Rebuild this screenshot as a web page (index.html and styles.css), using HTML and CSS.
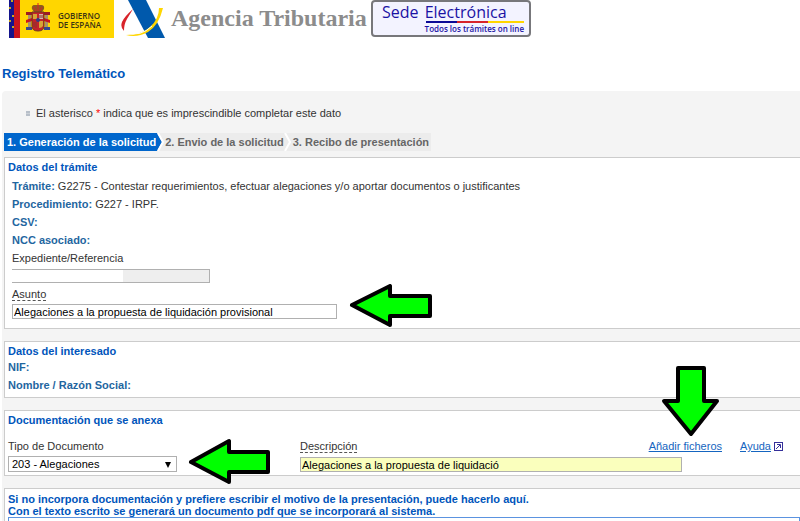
FILE: index.html
```html
<!DOCTYPE html>
<html lang="es">
<head>
    <meta charset="UTF-8">
    <title>Registro Telemático</title>
    <link rel="stylesheet" href="styles.css">
</head>
<body>
    <header class="header">
        <div class="gobierno">
            <svg class="escudo" width="44" height="38" viewBox="0 0 44 38">
                <rect width="11" height="38" fill="#14148c"/>
                <rect x="5" width="6" height="38" fill="#c8141e"/>
                <rect x="11" width="33" height="38" fill="#ffd600"/>
                <g fill="#ffd600">
                    <circle cx="3" cy="1" r="1"/><circle cx="1" cy="8" r="1"/><circle cx="4" cy="16" r="1"/>
                    <circle cx="1" cy="21" r="1"/><circle cx="4" cy="27" r="1"/>
                </g>
                <path d="M23 9c-1-5 3-4 6-4s7-1 6 4l-2 3h-8z" fill="#8f5a1e"/>
                <path d="M29 3v8M25 7l2 4M33 7l-2 4" stroke="#d6232a" stroke-width="1"/>
                <path d="M19 14h3v14h-3zM36 14h3v14h-3z" fill="#a8926a"/>
                <path d="M17 12h6v3h-6zM35 12h6v3h-6z" fill="#9c1c22"/>
                <path d="M17 20l6-2v3l-6 2zM41 20l-6-2v3l6 2z" fill="#c8141e"/>
                <path d="M17 27h6v3h-6zM35 27h6v3h-6z" fill="#37478e"/>
                <path d="M23 12h12v14q0 5-6 5t-6-5z" fill="#c4222a" stroke="#6d3b20"/>
                <path d="M24 14h4v5h-4zM30 21h4v5q-1 2-4 2z" fill="#d7a435"/>
                <path d="M30 14h4v5h-4z" fill="#d8b7ad"/>
                <path d="M31 15v3M33 15v3M25 22v5M27 22v6" stroke="#84362c"/>
                <circle cx="29" cy="20" r="2" fill="#2e3d86"/>
            </svg>
            <span>GOBIERNO<br>DE ESPAÑA</span>
        </div>
        <svg class="aeat" width="44" height="38" viewBox="0 0 44 38">
            <path d="M7 0h18l19 38H27z" fill="#0059ac"/>
            <path d="M12 9Q9 14 6 19T3 31Q-1 27 1 22T12 9z" fill="#d8232a"/>
            <path d="M38 8h4Q38 25 27 32Q16 38 5 35Q20 35 29 27T38 8z" fill="#ffd600"/>
            <path d="M5 33Q20 37 31 26" fill="none" stroke="#fff"/>
        </svg>
        <span class="agencia">Agencia Tributaria</span>
        <div class="sede">
            <span class="sede-title">Sede <span class="electronica">Electrónica</span></span>
            <span class="sede-line"></span>
            <span class="sede-sub">Todos los trámites on line</span>
        </div>
    </header>

    <h1>Registro Telemático</h1>

    <main class="panel">
        <p class="nota">
            <svg width="4" height="5" viewBox="0 0 4 5"><path d="M0 1h4M0 4h4M1 0v5M3 0v5" stroke="#a3adba"/></svg>
            <span>El asterisco <span class="req">*</span> indica que es imprescindible completar este dato</span>
        </p>

        <ol class="steps">
            <li class="active">1. Generación de la solicitud
                <svg width="8" height="18" viewBox="0 0 8 18"><path d="M0 0h1l5 9-5 9H0z" fill="#0066cc"/><path d="M2 0l5 9-5 9" fill="none" stroke="#fff" stroke-width="2"/></svg>
            </li>
            <li>2. Envio de la solicitud
                <svg width="8" height="18" viewBox="0 0 8 18"><path d="M1 0l5 9-5 9" fill="none" stroke="#fff" stroke-width="2"/></svg>
            </li>
            <li>3. Recibo de presentación</li>
        </ol>

        <section class="card tramite">
            <h2>Datos del trámite</h2>
            <div class="rows">
                <p><b>Trámite:</b> G2275 - Contestar requerimientos, efectuar alegaciones y/o aportar documentos o justificantes</p>
                <p><b>Procedimiento:</b> G227 - IRPF.</p>
                <p><b>CSV:</b></p>
                <p><b>NCC asociado:</b></p>
                <label for="expediente">Expediente/Referencia</label>
                <input type="text" id="expediente" class="expediente" readonly>
                <label for="asunto"><span class="hint">Asunto</span></label>
                <input type="text" id="asunto" class="asunto" value="Alegaciones a la propuesta de liquidación provisional">
            </div>
            <svg class="arrow arrow-asunto" width="84" height="44" viewBox="0 0 84 44">
                <path d="M3 21L41 2v10h40v20H41v9z" />
            </svg>
        </section>

        <section class="card interesado">
            <h2>Datos del interesado</h2>
            <p><b>NIF:</b></p>
            <p><b>Nombre / Razón Social:</b></p>
        </section>

        <section class="card anexo">
            <h2>Documentación que se anexa</h2>
            <div class="doc">
                <div class="doc-tipo">
                    <label for="tipo">Tipo de Documento</label>
                    <div class="select">
                        <select id="tipo">
                            <option>203 - Alegaciones</option>
                        </select>
                    </div>
                </div>
                <div class="doc-desc">
                    <div class="doc-head">
                        <label for="descripcion"><span class="hint">Descripción</span></label>
                        <a href="#" class="add">Añadir ficheros</a>
                        <a href="#">Ayuda</a>
                        <svg width="9" height="9" viewBox="0 0 9 9"><path d="M0 0h9v9H0z" fill="#35309a"/><path d="M1 1h7v7H1z" fill="#fff"/><path d="M2 7l4-4M3 2.500h3.500V6" fill="none" stroke="#35309a"/></svg>
                    </div>
                    <input type="text" id="descripcion" class="descripcion" value="Alegaciones a la propuesta de liquidació">
                </div>
            </div>
            <svg class="arrow arrow-tipo" width="84" height="48" viewBox="0 0 84 48">
                <path d="M3 24L41 3v11h39v20H41v10z" />
            </svg>
            <svg class="arrow arrow-add" width="60" height="72" viewBox="0 0 60 72">
                <path d="M17 3h26v33h13L30 69 3 36h14z" />
            </svg>
        </section>

        <section class="card motivo">
            <label for="motivo">Si no incorpora documentación y prefiere escribir el motivo de la presentación, puede hacerlo aquí.<br>Con el texto escrito se generará un documento pdf que se incorporará al sistema.</label>
            <textarea id="motivo"></textarea>
        </section>
    </main>
</body>
</html>
```

FILE: styles.css
```css
* {
    box-sizing: border-box;
}

html {
    height: 100%;
    overflow: hidden;
}

body {
    margin: 0;
    font-family: Arial, "Liberation Sans", sans-serif;
    font-size: 11px;
    line-height: 18px;
    color: #333;
    background: #fff;
}

h1, h2, p, ol {
    margin: 0;
    padding: 0;
}

svg {
    display: block;
    flex: none;
}

.header {
    display: flex;
    align-items: flex-start;
    height: 38px;
    padding-left: 9px;
    white-space: nowrap;
}

.gobierno {
    display: flex;
    align-items: center;
    width: 105px;
    height: 38px;
    background: #ffd600;
    font-family: "Open Sans", sans-serif;
    font-size: 8px;
    font-weight: 600;
    line-height: 9px;
    color: #3c3413;
}

.gobierno span {
    margin-left: 5px;
    padding-top: 2px;
}

.aeat {
    margin-left: 7px;
}

.agencia {
    width: 200px;
    margin-left: 6px;
    font-family: "Liberation Serif", serif;
    font-size: 24px;
    font-weight: bold;
    line-height: 36px;
    color: #8c8c8c;
}

.sede {
    display: flex;
    flex-direction: column;
    width: 160px;
    height: 37px;
    padding: 2px 5px 0 9px;
    border: 2px solid #77777b;
    border-radius: 4px;
    background: #f3f3ff;
    font-family: "Open Sans", sans-serif;
    color: #1a12a4;
}

.sede-title {
    font-size: 16px;
    line-height: 17px;
}

.electronica {
    margin-left: 2px;
}

.sede-line {
    width: 98px;
    height: 2px;
    margin-left: auto;
    background: linear-gradient(90deg, #0a0a96 32%, #d8232a 32%, #d8232a 63%, #ffd600 63%);
}

.sede-sub {
    margin-left: auto;
    font-size: 8px;
    font-weight: 600;
    line-height: 11px;
}

h1 {
    margin: 27px 0 8px 2px;
    font-size: 13px;
    line-height: 18px;
    color: #0055bb;
}

.panel {
    margin-left: 2px;
    padding: 13px 0 0 2px;
    border-top-left-radius: 4px;
    background: #f4f4f4;
}

.nota {
    display: flex;
    align-items: center;
    gap: 6px;
    padding-left: 22px;
}

.req {
    color: #f00;
}

.steps {
    display: flex;
    margin: 11px 0 6px;
    list-style: none;
}

.steps li {
    display: flex;
    padding-left: 1px;
    background: #ececec;
    font-weight: bold;
    color: #666;
    white-space: nowrap;
}

.steps li:last-child {
    padding-right: 2px;
}

.steps .active {
    padding-left: 3px;
    background: linear-gradient(90deg, #0066cc calc(100% - 8px), #ececec 0);
    color: #fff;
}

.card {
    position: relative;
    margin-bottom: 12px;
    padding-left: 3px;
    border: 1px solid #ccc;
    border-right: 0;
    background: #fff;
}

h2 {
    font-size: 11px;
    line-height: 18px;
    color: #0055bb;
}

b {
    color: #1f669f;
}

label {
    display: block;
}

input, select, textarea {
    display: block;
    margin: 0;
    padding: 0 1px;
    border: 1px solid #b0b0b0;
    border-radius: 0;
    font-family: Arial, "Liberation Sans", sans-serif;
    font-size: 11px;
    color: #000;
    outline: none;
}

.tramite {
    padding-bottom: 9px;
}

.rows {
    padding: 1px 0 0 4px;
}

.expediente {
    width: 198px;
    height: 14px;
    margin: 2px 0;
    border-left: 0;
    background: linear-gradient(90deg, #fff 111px, #eee 111px);
}

.hint {
    display: inline-block;
    border-bottom: 1px dashed #555;
    line-height: 12px;
}

.asunto {
    width: 325px;
    height: 15px;
    margin-top: 1px;
}

.interesado {
    padding-bottom: 3px;
}

.interesado h2 {
    padding-top: 2px;
    line-height: 14px;
}

.anexo {
    padding-bottom: 3px;
}

.doc {
    display: flex;
    padding-top: 8px;
}

.doc-tipo {
    width: 292px;
}

.select {
    position: relative;
    width: 169px;
    margin-top: 1px;
}

.select::after {
    content: "";
    position: absolute;
    top: 6px;
    right: 6px;
    border: solid transparent;
    border-width: 6px 3px 0;
    border-top-color: #000;
}

select {
    width: 100%;
    height: 16px;
    padding: 0 3px;
    appearance: none;
    background: #fff;
}

.doc-desc {
    flex: 1;
}

.doc-head {
    display: flex;
    align-items: center;
    padding-right: 17px;
}

.doc-head svg {
    margin-left: 3px;
}

a {
    color: #1565c0;
}

.add {
    margin: 0 18px 0 auto;
}

.descripcion {
    width: 382px;
    height: 15px;
    margin-top: 2px;
    background: #faffbd;
}

.motivo {
    margin-bottom: 0;
}

.motivo label {
    padding-top: 4px;
    line-height: 12px;
    font-weight: bold;
    color: #0055bb;
}

textarea {
    width: 100%;
    height: 80px;
    border: 1px solid #5b93e0;
    resize: none;
}

.arrow {
    position: absolute;
    fill: #0f0;
    stroke: #000;
    stroke-width: 4;
    stroke-linejoin: round;
}

.arrow-asunto {
    top: 126px;
    left: 344px;
}

.arrow-tipo {
    top: 27px;
    left: 183px;
}

.arrow-add {
    top: -46px;
    right: 79px;
}
```
